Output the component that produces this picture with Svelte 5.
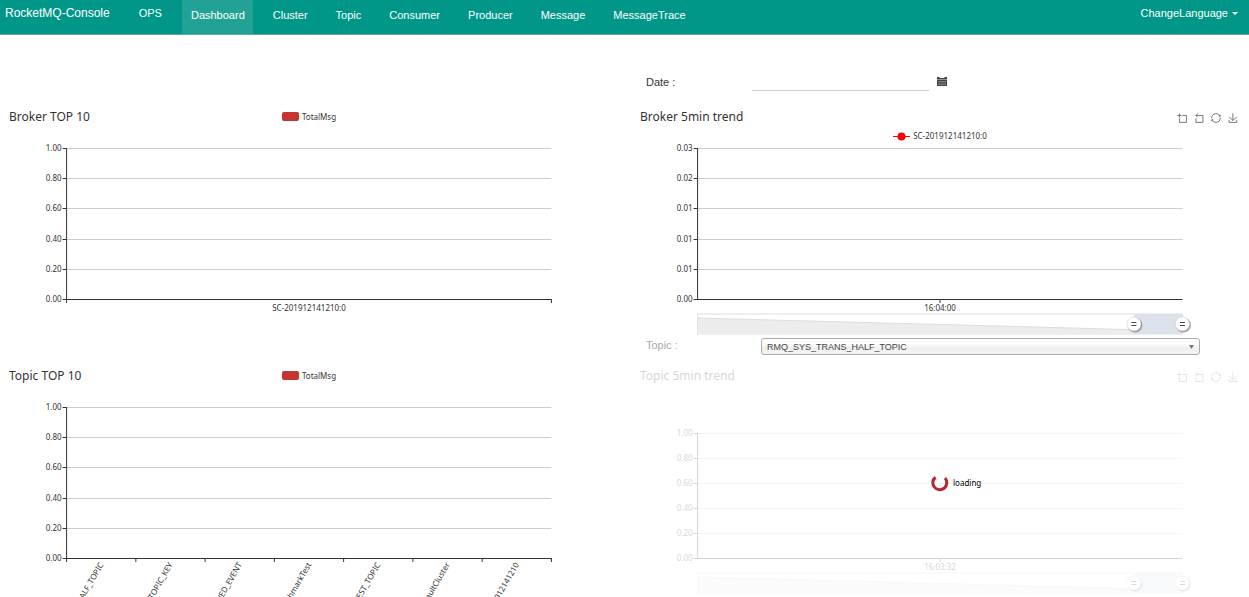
<script lang="ts">
	interface ChartSpec {
		id: string;
		title: string;
		legend?: string;
		trend?: boolean;
		loading?: boolean;
		top: number;
		yLabels: string[];
		xLabels: string[];
		rotate?: boolean;
	}

	const FLOOR = 157;
	const unitScale = ['1.00', '0.80', '0.60', '0.40', '0.20', '0.00'];
	const links = ['Dashboard', 'Cluster', 'Topic', 'Consumer', 'Producer', 'Message', 'MessageTrace'];
	const topics = ['RMQ_SYS_TRANS_HALF_TOPIC', 'BenchmarkTest', 'OFFSET_MOVED_EVENT', 'SELF_TEST_TOPIC'];

	const tools = [
		{ label: 'Zoom', d: 'M0,13.5h26.9 M13.5,26.9V0 M32.1,13.5H58V58H13.5 V32.1' },
		{ label: 'Zoom reset', d: 'M22,1.4L9.9,13.5l12.3,12.3 M10.3,13.5H54.9v44.6 H10.3v-26' },
		{
			label: 'Restore',
			d: 'M47,18.9h9.8V8.7 M56.3,20.1 C52.1,9,40.5,0.6,26.8,2.1C12.6,3.7,1.6,16.2,2.1,30.6 M13,41.1H3.1v10.2 M3.7,39.9c4.2,11.1,15.8,19.5,29.5,18 c14.2-1.6,25.2-14.1,24.7-28.5'
		},
		{
			label: 'Save as image',
			d: 'M4.7,22.9L29.3,45.5L54.7,23.4M4.6,43.6L4.6,58L53.8,58L53.8,43.6M29.2,45.1L29.2,0'
		}
	];

	const brokerTop: ChartSpec = {
		id: 'broker-top',
		title: 'Broker TOP 10',
		legend: 'TotalMsg',
		top: 6,
		yLabels: unitScale,
		xLabels: ['SC-201912141210:0']
	};
	const brokerTrend: ChartSpec = {
		id: 'broker-trend',
		title: 'Broker 5min trend',
		legend: 'SC-201912141210:0',
		trend: true,
		top: 6,
		yLabels: ['0.03', '0.02', '0.01', '0.01', '0.01', '0.00'],
		xLabels: ['16:04:00']
	};
	const topicTop: ChartSpec = {
		id: 'topic-top',
		title: 'Topic TOP 10',
		legend: 'TotalMsg',
		top: 6,
		yLabels: unitScale,
		xLabels: [
			'RMQ_SYS_TRANS_HALF_TOPIC',
			'AUTO_CREATE_TOPIC_KEY',
			'OFFSET_MOVED_EVENT',
			'BenchmarkTest',
			'SELF_TEST_TOPIC',
			'DefaultCluster',
			'SC-201912141210'
		],
		rotate: true
	};
	const topicTrend: ChartSpec = {
		id: 'topic-trend',
		title: 'Topic 5min trend',
		trend: true,
		loading: true,
		top: 32,
		yLabels: unitScale,
		xLabels: ['16:03:32']
	};

	let active = $state('Dashboard');
	let date = $state('');
	let topic = $state(topics[0]);

	function gridY(spec: ChartSpec, i: number): number {
		return Math.round(spec.top + ((FLOOR - spec.top) * i) / (spec.yLabels.length - 1)) + 0.5;
	}

	function bandX(spec: ChartSpec, i: number): string {
		return `${10 + (80 * i) / spec.xLabels.length}%`;
	}
</script>

{#snippet handle(x: string)}
	<svg {x} y="182" overflow="visible">
		<circle cx="1" cy="1" r="7.5" fill="#777" opacity="0.7" />
		<circle r="7" fill="#fff" stroke="#ccc" stroke-width="0.5" />
		<path d="M-2.5-1.5h5M-2.5 1.5h5" stroke="#444" />
	</svg>
{/snippet}

{#snippet chart(spec: ChartSpec)}
	<section class="chart" aria-labelledby={spec.id}>
		<div class="canvas" class:dimmed={spec.loading}>
			<header class="chart-head">
				<h2 id={spec.id}>{spec.title}</h2>
				{#if spec.legend}
					<div class="legend" class:below={spec.trend}>
						{#if spec.trend}
							<svg width="17" height="9" viewBox="0 0 17 9" aria-hidden="true">
								<path d="M0 4.5h17" stroke="red" />
								<circle cx="8.5" cy="4.5" r="4" fill="red" />
							</svg>
						{:else}
							<svg width="17" height="9" viewBox="0 0 17 9" aria-hidden="true">
								<rect width="17" height="9" rx="2" fill="#c23531" />
							</svg>
						{/if}
						<span>{spec.legend}</span>
					</div>
				{/if}
				{#if spec.trend}
					<div class="toolbox">
						{#each tools as tool}
							<button type="button" aria-label={tool.label}>
								<svg viewBox="-2 -2 64 64" width="10" height="10"><path d={tool.d} /></svg>
							</button>
						{/each}
					</div>
				{/if}
			</header>

			<svg class="plot" class:tall={spec.rotate} role="img" aria-labelledby={spec.id}>
				{#each spec.yLabels as label, i}
					{@const y = gridY(spec, i)}
					{#if i < spec.yLabels.length - 1}
						<line class="grid" x1="10%" x2="90%" y1={y} y2={y} />
					{/if}
					<svg x="10%" {y} overflow="visible">
						<path class="axis" d="M-4 0H0" />
						<text x="-5" y="2" text-anchor="end">{label}</text>
					</svg>
				{/each}

				<line class="axis" x1="10%" x2="90%" y1={FLOOR + 0.5} y2={FLOOR + 0.5} />
				<line class="axis" x1="10%" x2="10%" y1={spec.top} y2={FLOOR + 1} />

				{#if spec.trend}
					<line class="axis" x1="50%" x2="50%" y1={FLOOR} y2={FLOOR + 4} />
				{:else}
					{#each [...spec.xLabels, ''] as _, i}
						<line class="axis" x1={bandX(spec, i)} x2={bandX(spec, i)} y1={FLOOR} y2={FLOOR + 4} />
					{/each}
				{/if}

				{#each spec.xLabels as label, i}
					<svg x={bandX(spec, i + 0.5)} y={FLOOR} overflow="visible">
						{#if spec.rotate}
							<text x="0" y="3" text-anchor="end" transform="translate(0 5) rotate(-60)">{label}</text>
						{:else}
							<text x="0" y="12" text-anchor="middle">{label}</text>
						{/if}
					</svg>
				{/each}

				{#if spec.trend}
					<rect x="10%" y="172" width="80%" height="20" fill="#fff" stroke="#ddd" />
					<svg x="10%" y="172" width="80%" height="20" viewBox="0 0 100 20" preserveAspectRatio="none">
						<path d="M0 4L100 17V20H0z" fill="#ececec" />
						<path d="M0 4L100 17" stroke="#ddd" vector-effect="non-scaling-stroke" />
					</svg>
					<rect x="82%" y="172" width="8%" height="20" fill="#dbe2ec" />
					{@render handle('82%')}
					{@render handle('90%')}
				{/if}
			</svg>
		</div>

		{#if spec.loading}
			<div class="loading" role="status">
				<svg width="18" height="18" viewBox="0 0 18 18" aria-hidden="true">
					<path d="M4.5 3.2A7 7 0 1 0 14 4" fill="none" stroke="#b5282f" stroke-width="3" />
				</svg>
				<span>loading</span>
			</div>
		{/if}
	</section>
{/snippet}

<nav class="navbar">
	<a class="brand" href="#/">RocketMQ-Console</a>
	<a class="ops" href="#/ops">OPS</a>
	<ul>
		{#each links as link}
			<li>
				<a href="#/{link}" class:active={active === link} onclick={() => (active = link)}>{link}</a>
			</li>
		{/each}
	</ul>
	<button class="language" type="button">ChangeLanguage <span class="caret"></span></button>
</nav>

<main>
	<form class="date-row">
		<label for="date">Date :</label>
		<input id="date" type="text" bind:value={date} />
		<button type="button" aria-label="Open calendar">
			<svg width="10" height="11" viewBox="0 0 10 11">
				<path d="M0 1h2l1 1h4l1-1h2v9H0z" fill="#444" />
				<path d="M0 3.5h10M1 5.8h8M1 8.2h8" stroke="#aaa" stroke-width="0.8" />
			</svg>
		</button>
	</form>

	<div class="cell">{@render chart(brokerTop)}</div>
	<div class="cell">
		{@render chart(brokerTrend)}
		<div class="topic-row">
			<label for="topic">Topic :</label>
			<div class="select">
				<select id="topic" bind:value={topic}>
					{#each topics as name}
						<option>{name}</option>
					{/each}
				</select>
				<svg width="5" height="4" viewBox="0 0 5 4" aria-hidden="true"><path d="M0 0h5L2.5 4z" fill="#777" /></svg>
			</div>
		</div>
	</div>
	<div class="cell">{@render chart(topicTop)}</div>
	<div class="cell">{@render chart(topicTrend)}</div>
</main>

<style>
	:global(body) {
		background: #fff;
		color: #333;
		font-family: 'Liberation Sans', Arial, sans-serif;
		font-size: 11px;
		scrollbar-width: none;
	}

	button {
		padding: 0;
		border: 0;
		background: none;
		font: inherit;
		color: inherit;
		cursor: pointer;
	}

	button svg {
		display: block;
	}

	.navbar {
		display: flex;
		height: 34px;
		border-bottom: 1px solid #5fa89f;
		background: #009788;
		color: #fff;
		line-height: 26px;
	}

	.navbar a {
		color: inherit;
		text-decoration: none;
	}

	.brand {
		margin-left: 5px;
		font-size: 12px;
	}

	.ops {
		margin: 0 20px 0 29px;
	}

	.navbar ul {
		display: flex;
		gap: 11px;
		margin: 0;
		padding: 0;
		list-style: none;
	}

	.navbar li a {
		display: block;
		height: 34px;
		padding: 0 8px 0 9px;
		line-height: 30px;
	}

	.navbar li a.active {
		background: #22a294;
	}

	.language {
		display: flex;
		align-items: center;
		gap: 4px;
		height: 26px;
		margin: 0 11px 0 auto;
	}

	.caret {
		border: 3px solid transparent;
		border-top-color: #fff;
		border-bottom: 0;
	}

	main {
		display: grid;
		grid-template-columns: 1fr 1fr;
		column-gap: 25px;
		padding: 0 6px;
	}

	.date-row {
		display: grid;
		grid-column: 2;
		grid-template-columns: 106px 177px auto;
		justify-content: start;
		align-items: end;
		padding: 35px 0 17px 9px;
	}

	.date-row label {
		line-height: 17px;
	}

	.date-row input {
		box-sizing: border-box;
		width: 100%;
		height: 21px;
		border: 0;
		border-bottom: 1px solid #ccc;
		background: none;
		font: inherit;
	}

	.date-row button {
		margin: 0 0 4px 8px;
	}

	.cell {
		min-width: 0;
	}

	.chart {
		position: relative;
		font-family: 'Noto Sans', 'Open Sans', sans-serif;
		font-size: 8px;
	}

	.dimmed {
		opacity: 0.2;
	}

	.chart-head {
		display: grid;
		grid-template-columns: 1fr auto 1fr;
		grid-template-rows: 17px 17px;
		align-items: center;
	}

	.chart-head h2 {
		grid-area: 1 / 1;
		margin: 0 0 0 3px;
		font-size: 12px;
		font-weight: 400;
		line-height: 18px;
	}

	.legend {
		display: flex;
		grid-area: 1 / 2;
		align-items: center;
		gap: 3px;
		line-height: 12px;
	}

	.legend.below {
		grid-area: 2 / 2;
		align-self: end;
	}

	.toolbox {
		display: flex;
		grid-area: 1 / 3;
		justify-content: end;
		gap: 7px;
		padding: 3px 5px 0 0;
	}

	.toolbox path {
		fill: none;
		stroke: #555;
		stroke-width: 5;
	}

	.plot {
		display: block;
		width: 100%;
		height: 194px;
		overflow: visible;
	}

	.plot.tall {
		height: 260px;
	}

	.plot text {
		fill: #333;
	}

	.plot .grid {
		stroke: #ccc;
	}

	.plot .axis {
		stroke: #333;
	}

	.loading {
		position: absolute;
		top: 107px;
		left: 50%;
		display: flex;
		align-items: center;
		gap: 4px;
		margin-left: -9px;
		color: #000;
		line-height: 12px;
	}

	.topic-row {
		display: grid;
		grid-template-columns: 115px 1fr;
		align-items: start;
		margin-bottom: 12px;
		padding: 2px 43px 0 9px;
	}

	.topic-row label {
		color: #aaa;
		line-height: 15px;
	}

	.select {
		position: relative;
	}

	.select select {
		display: block;
		box-sizing: border-box;
		width: 100%;
		height: 17px;
		padding: 0 5px;
		border: 1px solid #aaa;
		border-radius: 3px;
		appearance: none;
		background: linear-gradient(#fff 20%, #f6f6f6 50%, #eee 52%, #f4f4f4);
		color: #444;
		font: inherit;
		font-size: 9px;
	}

	.select svg {
		position: absolute;
		top: 7px;
		right: 6px;
		pointer-events: none;
	}
</style>
